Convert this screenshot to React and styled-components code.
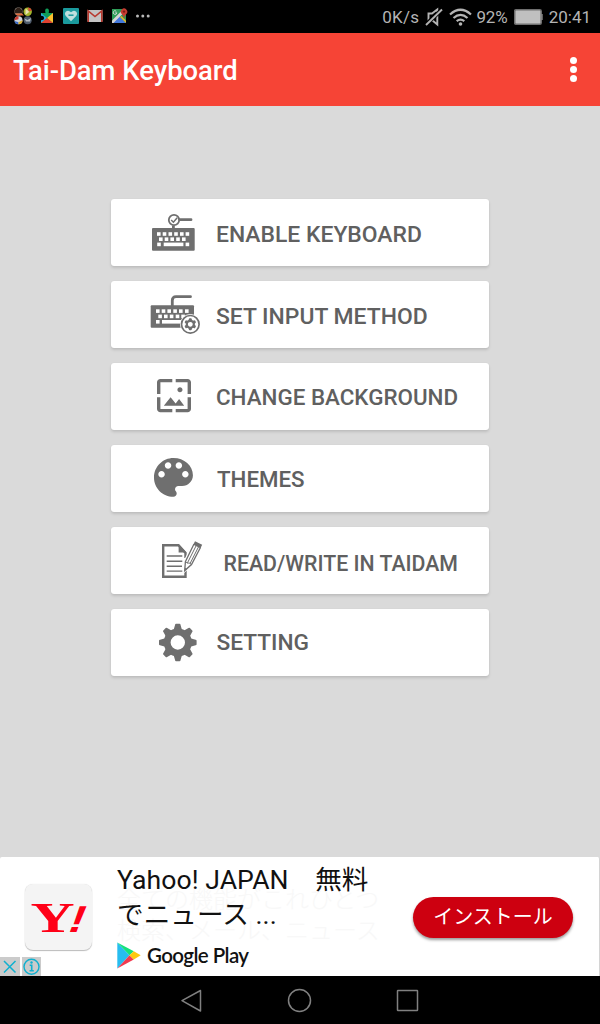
import React from 'react';
import styled, { createGlobalStyle } from 'styled-components';

const INK = '#6f6f6f';

const GlobalStyle = createGlobalStyle`
  * { box-sizing: border-box; }
  body {
    margin: 0;
    font-family: Roboto, "Noto Sans CJK JP", sans-serif;
  }
`;

const Screen = styled.div`
  width: 600px;
  height: 1024px;
  display: flex;
  flex-direction: column;
  overflow: hidden;
  background: #dadada;
`;

const StatusBar = styled.header`
  height: 33px;
  flex: none;
  display: flex;
  align-items: center;
  justify-content: space-between;
  padding: 0 9px 0 13px;
  background: #000;
`;

const Notifications = styled.div`
  display: flex;
  align-items: center;
  height: 33px;
  padding-bottom: 2px;
`;

const SystemInfo = styled.div`
  display: flex;
  align-items: center;
  height: 33px;
  color: #b4b4b4;
`;

const StatusText = styled.span`
  margin-left: ${(p) => p.$gap || 0}px;
  font-size: 17px;
  line-height: 32px;
  letter-spacing: ${(p) => p.$tracking || 0}px;
  white-space: nowrap;
  padding-top: 1px;
`;

const StatusIcon = styled.svg`
  display: block;
  flex: none;
  margin-left: ${(p) => p.$gap || 0}px;
`;

const AppBar = styled.div`
  height: 73px;
  flex: none;
  display: flex;
  align-items: center;
  justify-content: space-between;
  padding: 0 20px 0 13px;
  background: #f64436;
`;

const Title = styled.h1`
  margin: 0;
  padding-top: 2px;
  font-size: 27.4px;
  font-weight: 500;
  line-height: 36px;
  color: #fff;
  white-space: nowrap;
`;

const MoreButton = styled.button`
  display: flex;
  flex-direction: column;
  gap: 1.6px;
  width: 14px;
  align-items: center;
  padding: 0;
  border: 0;
  background: none;
`;

const Dot = styled.span`
  width: 7px;
  height: 7px;
  border-radius: 50%;
  background: #fff;
`;

const Menu = styled.main`
  flex: 1;
  display: flex;
  flex-direction: column;
  align-items: center;
  gap: 15px;
  padding-top: 93px;
`;

const MenuButton = styled.button`
  width: 378px;
  height: 67px;
  display: flex;
  align-items: center;
  padding: 0 0 0 34px;
  border: 0;
  border-radius: 3px;
  background: #fff;
  box-shadow: 0 2px 3px rgba(0, 0, 0, 0.13), 0 0 1px rgba(0, 0, 0, 0.1);
  font-family: inherit;
`;

const MenuIcon = styled.svg`
  width: 60px;
  height: 49px;
  flex: none;
  color: ${INK};
`;

const Label = styled.span`
  margin-left: ${(p) => p.$gap}px;
  padding-top: ${(p) => p.$drop}px;
  font-size: ${(p) => p.$size}px;
  font-weight: 500;
  line-height: 30px;
  color: #606060;
  white-space: nowrap;
`;

const AdBanner = styled.section`
  position: relative;
  height: 119px;
  flex: none;
  display: flex;
  background: #fff;
  border-radius: 2px 2px 0 0;
  border-right: 1px solid #d4d4d4;
`;

const AdLogo = styled.div`
  width: 67px;
  height: 66px;
  margin: 27px 0 0 25px;
  border-radius: 8px;
  background: #f4f4f4;
  box-shadow: 0 1px 1px #bbb, 0 0 1px #ddd;
`;

const AdCopy = styled.div`
  position: relative;
  width: 296px;
  margin-left: 25px;
  padding-top: 5px;
`;

const AdTitle = styled.div`
  position: relative;
  font-size: 26.6px;
  line-height: 35px;
  letter-spacing: 0.05px;
  color: #111;
  white-space: nowrap;
`;

const GhostCopy = styled.div`
  position: absolute;
  left: 0;
  top: 28px;
  font-size: 24px;
  font-weight: 300;
  line-height: 31px;
  color: #f8f8f8;
  white-space: nowrap;
`;

const Store = styled.div`
  position: relative;
  display: flex;
  align-items: center;
  margin-top: 9px;
  height: 28px;
`;

const StoreName = styled.span`
  margin-left: 6px;
  font-family: Lato, sans-serif;
  font-size: 20.5px;
  font-weight: 600;
  line-height: 26px;
  letter-spacing: -0.6px;
  color: #111;
  white-space: nowrap;
`;

const InstallButton = styled.button`
  width: 160px;
  height: 41px;
  margin-top: 40px;
  padding: 0 0 3px;
  border: 0;
  border-radius: 21px;
  background: #cd0010;
  box-shadow: 0 2px 3px rgba(0, 0, 0, 0.4);
  color: #fff;
  font-family: "Noto Sans CJK JP", sans-serif;
  font-size: 20px;
  line-height: 36px;
  white-space: nowrap;
`;

const AdChoices = styled.div`
  position: absolute;
  left: 0;
  bottom: 0;
  display: flex;
  gap: 2px;
`;

const Choice = styled.span`
  width: ${(p) => p.$width}px;
  height: 19px;
  background: #cbcbcb;
`;

const NavBar = styled.nav`
  height: 48px;
  flex: none;
  display: flex;
  align-items: center;
  justify-content: center;
  gap: 80px;
  background: #000;
  padding-top: 1px;
`;

const NavIcon = styled.svg`
  width: 28px;
  height: 28px;
  fill: none;
  stroke: #808080;
  stroke-width: 1.5;
`;

const Keys = ({ rows, size = 3.6 }) =>
  rows.map(([y, xs]) =>
    xs.map(([x, w]) => (
      <rect key={`${x}-${y}`} x={x} y={y} width={w || size} height={size} fill="#fff" />
    ))
  );

const Gear = ({ cx, cy, teeth, outer, body, hole, top, base }) => (
  <g transform={`translate(${cx} ${cy})`}>
    {Array.from({ length: teeth }, (_, i) => (
      <path
        key={i}
        transform={`rotate(${(360 / teeth) * i})`}
        d={`M${-base} ${-body + 1.5}L${-top} ${-outer + 1}Q${-top} ${-outer} ${-top + 1} ${-outer}H${top - 1}Q${top} ${-outer} ${top} ${-outer + 1}L${base} ${-body + 1.5}Z`}
        fill="currentColor"
      />
    ))}
    <circle r={(body + hole) / 2} fill="none" stroke="currentColor" strokeWidth={body - hole} />
  </g>
);

const EnableIcon = () => (
  <>
    <rect x="7" y="20" width="42.7" height="22.8" rx="1" fill="currentColor" />
    <Keys
      rows={[
        [24.2, [[12], [17.7], [23.5], [29.2], [35], [40.6]]],
        [29.4, [[14], [19.7], [25.4], [31.2], [37]]],
        [34.6, [[12.2], [18.7, 19.7], [40.6]]],
      ]}
    />
    <circle cx="29" cy="12" r="5.2" fill="none" stroke="currentColor" strokeWidth="1.8" />
    <path d="M26.2 12l2.2 2.2 3.8-4.4" fill="none" stroke="currentColor" strokeWidth="1.5" />
    <path d="M34.6 11.7H46" stroke="currentColor" strokeWidth="2.8" strokeLinecap="round" />
    <path d="M28.4 17.5V21" stroke="currentColor" strokeWidth="2.8" />
  </>
);

const InputIcon = () => (
  <>
    <rect x="5.7" y="15.3" width="43.3" height="22.5" rx="1" fill="currentColor" />
    <Keys
      rows={[
        [19.3, [[11], [16.7], [22.4], [28.3], [34], [40]]],
        [24.6, [[13.3], [19], [24.8], [30.7], [36.3]]],
        [30, [[11], [17, 20]]],
      ]}
    />
    <path d="M27.3 16v-5.6q0-3.7 3.7-3.7H45.5" fill="none" stroke="currentColor" strokeWidth="2.8" strokeLinecap="round" />
    <circle cx="45.3" cy="34.3" r="10.3" fill="#fff" />
    <circle cx="45.3" cy="34.3" r="8.8" fill="none" stroke="currentColor" strokeWidth="1.7" />
    <Gear cx={45.3} cy={34.3} teeth={6} outer={6} body={4.5} hole={2.4} top={1.5} base={2} />
  </>
);

const WallpaperIcon = () => (
  <path
    transform="translate(8.6 3.6) scale(1.7 1.67)"
    fill="currentColor"
    d="M4 4h7V2H4c-1.1 0-2 .9-2 2v7h2V4zm6 9l-4 5h12l-3-4-2.03 2.71L10 13zm7-4.5c0-.83-.67-1.5-1.5-1.5S14 7.67 14 8.5s.67 1.5 1.5 1.5S17 9.33 17 8.5zM20 2h-7v2h7v7h2V4c0-1.1-.9-2-2-2zm0 18h-7v2h7c1.1 0 2-.9 2-2v-7h-2v7zM4 13H2v7c0 1.1.9 2 2 2h7v-2H4v-7z"
  />
);

const PaletteIcon = () => (
  <path
    transform="translate(2.5 -2.4) scale(2.163 2.15)"
    fill="currentColor"
    d="M12 3c-4.97 0-9 4.03-9 9s4.03 9 9 9c.83 0 1.5-.67 1.5-1.5 0-.39-.15-.74-.39-1.01-.23-.26-.38-.61-.38-.99 0-.83.67-1.5 1.5-1.5H16c2.76 0 5-2.24 5-5 0-4.42-4.03-8-9-8zm-5.5 9c-.83 0-1.5-.67-1.5-1.5S5.67 9 6.5 9 8 9.67 8 10.5 7.33 12 6.5 12zm3-4C8.67 8 8 7.33 8 6.5S8.67 5 9.5 5s1.5.67 1.5 1.5S10.33 8 9.5 8zm5 0c-.83 0-1.5-.67-1.5-1.5S13.67 5 14.5 5s1.5.67 1.5 1.5S15.33 8 14.5 8zm3 4c-.83 0-1.5-.67-1.5-1.5S16.67 9 17.5 9s1.5.67 1.5 1.5-.67 1.5-1.5 1.5z"
  />
);

const WriteIcon = () => (
  <>
    <path d="M40.5 34V40.8H18.2V9.2H33.5L40.5 17V22" fill="none" stroke="currentColor" strokeWidth="2.4" />
    <path d="M33.6 8.2L41.6 16.6H33.6Z" fill="currentColor" />
    <path d="M21.7 20H37.3M21.7 25.3H37.3M21.7 30.3H37M21.7 35.1H37.3" stroke="currentColor" strokeWidth="1.4" />
    <path d="M50 5.3L57 8.8L47 28.2L39.4 35L40 25Z" fill="#fff" stroke="#fff" strokeWidth="2.6" />
    <path d="M49 8L40.4 25.6L39.7 34.6L46.5 28.6L55.6 11.2" fill="none" stroke="currentColor" strokeWidth="1.3" />
    <path d="M51.3 9.4L42.4 27M53.8 10.3L44.8 28" stroke="currentColor" strokeWidth="1" />
    <path d="M40.4 25.6L42.4 27.2L44.4 27L46.5 28.6" fill="none" stroke="currentColor" strokeWidth="0.9" />
    <path d="M50 5.2L57.2 8.8L55.4 12.2L48.3 8.7Z" fill="currentColor" />
    <path d="M39.6 34.8L39.9 31.8L42 33Z" fill="currentColor" />
  </>
);

const SettingIcon = () => (
  <Gear cx={32.8} cy={24.5} teeth={8} outer={18.8} body={14} hole={7.2} top={2.7} base={4.2} />
);

const MENU = [
  { text: 'ENABLE KEYBOARD', Icon: EnableIcon, gap: 11, drop: 4, size: 22.9 },
  { text: 'SET INPUT METHOD', Icon: InputIcon, gap: 11, drop: 4, size: 22.9 },
  { text: 'CHANGE BACKGROUND', Icon: WallpaperIcon, gap: 11, drop: 1, size: 22.4 },
  { text: 'THEMES', Icon: PaletteIcon, gap: 12, drop: 0, size: 22.3 },
  { text: 'READ/WRITE IN TAIDAM', Icon: WriteIcon, gap: 18.5, drop: 7, size: 21.3 },
  { text: 'SETTING', Icon: SettingIcon, gap: 11.5, drop: 1, size: 22.7 },
];

const NotificationIcons = () => (
  <StatusIcon width="140" height="24" viewBox="13 4 140 24">
    <circle cx="18.5" cy="11.5" r="4" fill="#b9b0a6" />
    <path d="M14.5 10.5q4-6 8 0v3h-8z" fill="#2e2018" />
    <path d="M15 13.5h7l2 2h-7z" fill="#e06a3a" />
    <circle cx="27.7" cy="11.8" r="4.2" fill="#a5b52b" />
    <path d="M25.5 8.5l4 3.3-4 3.3z" fill="#e8e2b0" />
    <path d="M28 7.6a4.2 4.2 0 0 1 3.8 3l-3 1z" fill="#d34a34" />
    <circle cx="18.5" cy="20.3" r="4" fill="#cfd3d8" />
    <path d="M14.5 20.3a4 4 0 0 1 4-4v3z" fill="#cf3b30" />
    <path d="M14.5 21a4 4 0 0 0 4 3.3v-2z" fill="#3667c4" />
    <path d="M22.5 20.3a4 4 0 0 1-4 4v-2z" fill="#d9ad2e" />
    <circle cx="27.7" cy="20.3" r="4" fill="#4e5b6b" />
    <path d="M24.5 18.5l3 1.5 3.5-2-1 3.5h-4z" fill="#b5bcc4" />

    <path d="M41 13h4.5q-1.2-4.5 1.5-4.5t1.7 4.5H53v10H41z" fill="#0f9d58" />
    <path d="M41 13l6 5-6 5v-3.2q2.4 0 2.4-1.9T41 16z" fill="#29a9dc" />
    <path d="M53 13v10l-6-5z" fill="#fbc02d" />
    <path d="M41 23l6-5 6 5z" fill="#e0402f" />
    <path d="M41 15.8q3 0 3 2.2t-3 2.2z" fill="#000" />

    <rect x="63" y="8" width="16" height="16" rx="1" fill="#1a9a9d" />
    <path d="M71 21.2l-5.2-5.2q-1.8-2.6.2-4.6 2.5-1.8 5 .8 2.5-2.6 5-.8 2 2 .2 4.6z" fill="#bfe0df" />
    <path d="M68.5 15.2h5" stroke="#1a9a9d" strokeWidth="1.5" />

    <rect x="87.5" y="10" width="15" height="12" rx="1" fill="#c4c4c4" />
    <path d="M88.2 22V11L95 16.5l6.800-5.500V22" fill="none" stroke="#b8392f" strokeWidth="1.6" />

    <path d="M112 9h14v14h-14z" fill="#2d9c57" />
    <path d="M112 23l7-7 7 7z" fill="#4479dc" />
    <path d="M112 20.5l10-10 2 2L113.5 23H112z" fill="#d4d4d4" />
    <path d="M114 23l5.500-5 5.500 5z" fill="#4479dc" />
    <path d="M121.5 16l4.5 4.5V23l-6-6z" fill="#e0b52f" />
    <path d="M116.3 11.3a1.8 1.8 0 1 0 .5 1.5h-1.5" fill="none" stroke="#ddd" strokeWidth="0.9" />
    <path d="M124 18.5q-.5-3-2.2-4.5a3.200 3.200 0 1 1 4.500 0q-1.800 1.500-2.300 4.500z" fill="#c63b30" />
    <circle cx="124" cy="11.6" r="1.2" fill="#7c1d17" />

    <g fill="#b9b9b9">
      <circle cx="137.5" cy="16" r="1.5" />
      <circle cx="142.8" cy="16" r="1.5" />
      <circle cx="148.2" cy="16" r="1.5" />
    </g>
  </StatusIcon>
);

export default function App() {
  return (
    <Screen>
      <GlobalStyle />
      <StatusBar>
        <Notifications>
          <NotificationIcons />
        </Notifications>
        <SystemInfo>
          <StatusText $tracking={0.3}>0K/s</StatusText>
          <StatusIcon $gap={6} width="18" height="20" viewBox="0 0 18 20">
            <path d="M3.5 6.5H7L12.3 2.5V17.5L7.5 13.5H3.5Z" fill="none" stroke="#b4b4b4" strokeWidth="1.9" />
            <path d="M1 17.5L17 2.5" stroke="#000" strokeWidth="4" />
            <path d="M1 18L17 2.5" stroke="#b4b4b4" strokeWidth="1.9" />
          </StatusIcon>
          <StatusIcon $gap={6} width="23" height="20" viewBox="0 0 23 20">
            <g fill="none" stroke="#b4b4b4" strokeWidth="2.2">
              <path d="M1 7.5Q11.5-2 22 7.5" />
              <path d="M4.5 11Q11.5 4.7 18.5 11" />
              <path d="M7.7 14.2Q11.5 11 15.3 14.2" />
            </g>
            <circle cx="11.5" cy="17" r="1.8" fill="#b4b4b4" />
          </StatusIcon>
          <StatusText $gap={4} $tracking={-0.1}>92%</StatusText>
          <StatusIcon $gap={6} width="29" height="18" viewBox="0 0 29 18">
            <rect x="0.7" y="1.7" width="26.5" height="14.6" rx="1.5" fill="#c0c0c0" stroke="#6f6f6f" strokeWidth="1.6" />
            <rect x="27.3" y="6" width="1.4" height="6" fill="#8a8a8a" />
          </StatusIcon>
          <StatusText $gap={6}>20:41</StatusText>
        </SystemInfo>
      </StatusBar>

      <AppBar>
        <Title>Tai-Dam Keyboard</Title>
        <MoreButton aria-label="More options">
          <Dot />
          <Dot />
          <Dot />
        </MoreButton>
      </AppBar>

      <Menu>
        {MENU.map(({ text, Icon, gap, drop, size }) => (
          <MenuButton key={text}>
            <MenuIcon viewBox="0 0 60 49">
              <Icon />
            </MenuIcon>
            <Label $gap={gap} $drop={drop} $size={size}>
              {text}
            </Label>
          </MenuButton>
        ))}
      </Menu>

      <AdBanner>
        <AdLogo>
          <svg width="67" height="66" viewBox="0 0 67 66">
            <g fill="#ff0017" fontWeight="700">
              <text transform="translate(5.5 47.5) scale(1.42 1)" fontSize="43" fontFamily="Liberation Serif, serif">Y</text>
              <text transform="translate(40.5 48) skewX(-21) scale(1.25 1)" fontSize="37.5" fontFamily="Liberation Sans, sans-serif">!</text>
            </g>
          </svg>
        </AdLogo>
        <AdCopy>
          <GhostCopy>
            全ての機能がこれひとつ
            <br />
            検索、メール、ニュース
          </GhostCopy>
          <AdTitle>Yahoo! JAPAN　無料</AdTitle>
          <AdTitle>でニュース ...</AdTitle>
          <Store>
            <svg width="24" height="27" viewBox="0 0 24 27">
              <path d="M0.3 0.5L12.5 13.3L0.3 26.5Z" fill="#27bdf0" />
              <path d="M0.3 0.5L16.8 9.2L12.5 13.3Z" fill="#14e07c" />
              <path d="M0.3 26.5L16.8 17.5L12.5 13.3Z" fill="#f23a4f" />
              <path d="M16.8 9.2L23.7 13.3L16.8 17.5L12.5 13.3Z" fill="#fdc90d" />
            </svg>
            <StoreName>Google Play</StoreName>
          </Store>
        </AdCopy>
        <InstallButton>インストール</InstallButton>
        <AdChoices>
          <Choice $width={20}>
            <svg width="20" height="19" viewBox="0 0 20 19">
              <path d="M4 4L15.5 15.5M15.5 4L4 15.5" stroke="#0fb0cf" strokeWidth="1.5" />
            </svg>
          </Choice>
          <Choice $width={19}>
            <svg width="19" height="19" viewBox="0 0 19 19">
              <circle cx="9.5" cy="9.7" r="7.5" fill="none" stroke="#0fb0cf" strokeWidth="1.4" />
              <path d="M7.7 8.3H9.7V13.5M7.5 13.7H11.8" fill="none" stroke="#0fb0cf" strokeWidth="1.6" />
              <circle cx="9.5" cy="5.5" r="1.2" fill="#0fb0cf" />
            </svg>
          </Choice>
        </AdChoices>
      </AdBanner>

      <NavBar>
        <NavIcon viewBox="0 0 28 28">
          <path d="M22.5 3.5V24L4 13.7Z" strokeLinejoin="round" />
        </NavIcon>
        <NavIcon viewBox="0 0 28 28">
          <circle cx="13.5" cy="13.5" r="11" />
        </NavIcon>
        <NavIcon viewBox="0 0 28 28">
          <rect x="3.5" y="3.5" width="20" height="20" rx="0.5" />
        </NavIcon>
      </NavBar>
    </Screen>
  );
}
